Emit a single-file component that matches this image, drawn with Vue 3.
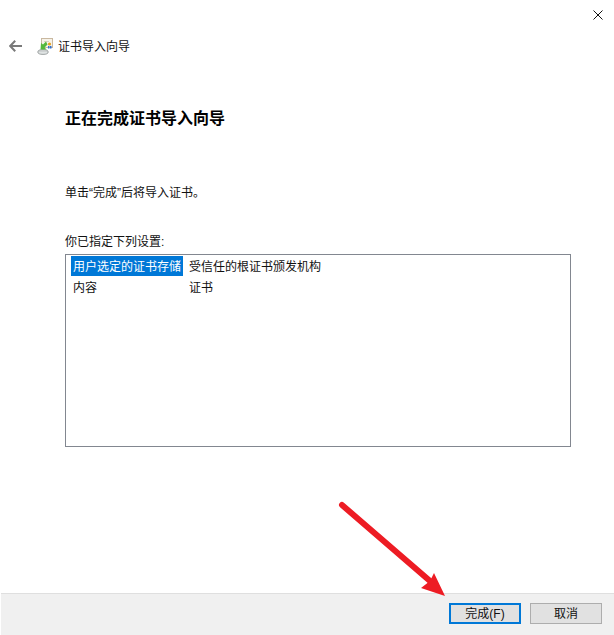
<script setup>
const rows = [
  { key: '用户选定的证书存储', value: '受信任的根证书颁发机构', selected: true },
  { key: '内容', value: '证书', selected: false }
]
</script>

<template>
  <div class="wizard">
    <div class="close-row">
      <svg class="close" width="10" height="10" viewBox="0 0 10 10">
        <path d="M0.5 0.5 L9.5 9.5 M9.5 0.5 L0.5 9.5" stroke="#111" stroke-width="1" fill="none" />
      </svg>
    </div>
    <div class="nav">
      <svg class="back" width="13" height="12" viewBox="0 0 13 12">
        <path d="M6.2 0.8 L1.2 6 L6.2 11.2 M1.2 6 H13" stroke="#7a7a7a" stroke-width="2" fill="none" />
      </svg>
      <svg class="cert" width="17" height="17" viewBox="0 0 17 17">
        <rect x="4.5" y="0.5" width="11" height="9" fill="#f6f2e8" stroke="#c9b8a0" />
        <rect x="7" y="3" width="5" height="1" fill="#d8d0c0" />
        <circle cx="12.5" cy="6" r="1.6" fill="#e8a020" />
        <rect x="11" y="8" width="1.5" height="2.5" fill="#2f6fd0" />
        <rect x="13" y="8" width="1.5" height="2.5" fill="#2f6fd0" />
        <ellipse cx="6" cy="14" rx="5.2" ry="2.4" fill="#dfe3e3" stroke="#8b9090" stroke-width="0.8" />
        <path d="M1 13 H11" stroke="#b5baba" stroke-width="0.8" />
        <path d="M9 3.5 L6 6.5 L4 5 L3.5 11.5 L9.5 11.5 L7.6 9.5 L10.5 6.5 Z" fill="#55b83c" />
      </svg>
      <span class="nav-title">证书导入向导</span>
    </div>

    <main class="content">
      <h1 class="heading">正在完成证书导入向导</h1>
      <p class="intro">单击“完成”后将导入证书。</p>
      <p class="label">你已指定下列设置:</p>
      <div class="listbox">
        <div v-for="row in rows" :key="row.key" class="row">
          <span class="key" :class="{ selected: row.selected }">{{ row.key }}</span>
          <span class="value">{{ row.value }}</span>
        </div>
      </div>
    </main>

    <footer class="footer">
      <button class="btn primary" type="button">完成(F)</button>
      <button class="btn" type="button">取消</button>
    </footer>

    <svg class="arrow" width="120" height="110" viewBox="0 0 120 110">
      <path d="M4 5 L92 81" stroke="#ed1c24" stroke-width="6" stroke-linecap="round" fill="none" />
      <path d="M96 73 L107 96 L83 88 L92 81 Z" fill="#ed1c24" />
    </svg>
  </div>
</template>

<style>
html, body { margin: 0; background: #fff; }
</style>

<style scoped>
.wizard {
  position: relative;
  width: 614px;
  height: 635px;
  display: flex;
  flex-direction: column;
  background: #fff;
  font-family: "Liberation Sans", "Noto Sans CJK SC", sans-serif;
  font-size: 12px;
  color: #111;
  overflow: hidden;
}
.close-row {
  display: flex;
  justify-content: flex-end;
  height: 38px;
  padding: 10px 11px 0 0;
  box-sizing: border-box;
}
.nav {
  display: flex;
  align-items: center;
  height: 17px;
  padding-left: 9px;
}
.back { margin: -1px 15px 0 0; }
.cert { margin-right: 4px; }
.nav-title { line-height: 17px; padding-top: 2px; }
.content {
  flex: 1;
  padding: 0 43px 0 65px;
}
.heading {
  margin: 52px 0 0;
  font-size: 16px;
  font-weight: 700;
  line-height: 24px;
  color: #000;
}
.intro {
  margin: 53px 0 0;
  line-height: 18px;
}
.label {
  margin: 31px 0 0;
  line-height: 18px;
}
.listbox {
  margin-top: 3px;
  height: 193px;
  box-sizing: border-box;
  border: 1px solid #828790;
  padding: 1px 0 0 5px;
}
.row {
  display: flex;
  height: 21px;
  line-height: 22px;
}
.key {
  width: 112px;
  height: 20px;
  white-space: nowrap;
  padding-left: 2px;
  box-sizing: border-box;
}
.key.selected {
  background: #0078d7;
  color: #fff;
}
.value {
  margin-left: 6px;
  white-space: nowrap;
}
.footer {
  display: flex;
  justify-content: flex-end;
  gap: 9px;
  height: 42px;
  box-sizing: border-box;
  margin-left: 1px;
  padding: 9px 12px 0 0;
  background: #f0f0f0;
  border-top: 1px solid #dfdfdf;
}
.btn {
  width: 72px;
  height: 21px;
  padding: 0;
  box-sizing: border-box;
  border: 1px solid #adadad;
  background: #e1e1e1;
  font: inherit;
  color: #111;
  line-height: 14px;
}
.primary {
  border: 2px solid #0078d7;
}
.arrow {
  position: absolute;
  left: 338px;
  top: 500px;
  pointer-events: none;
}
</style>
